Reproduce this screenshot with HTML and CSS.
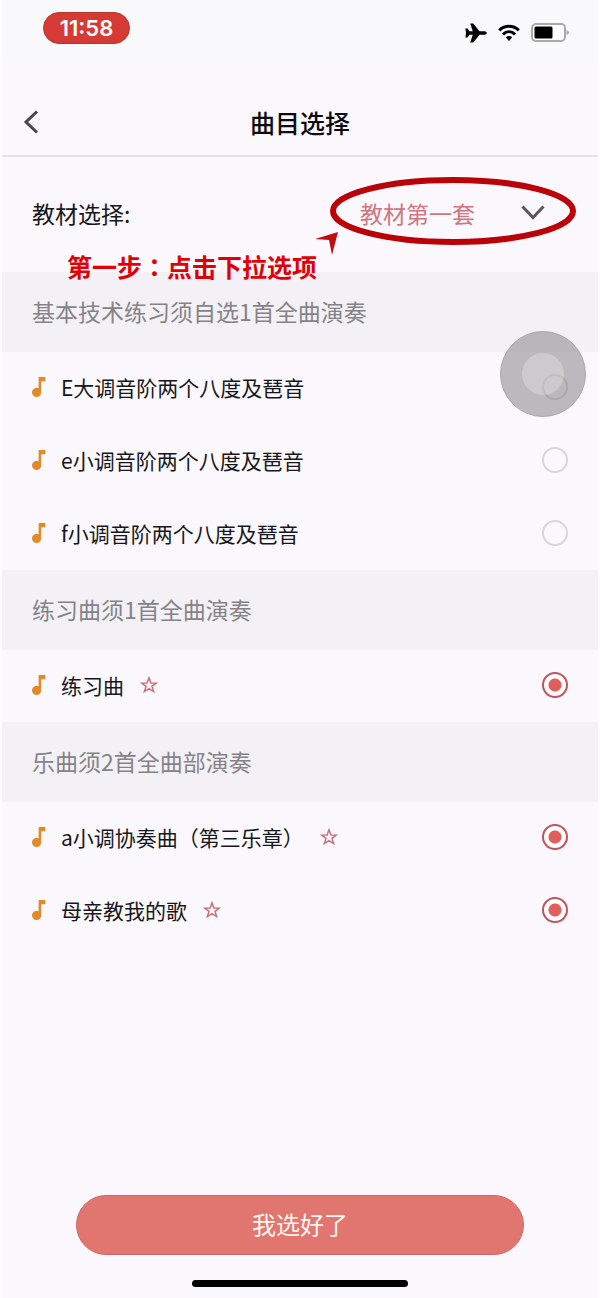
FILE: index.html
```html
<!DOCTYPE html>
<html lang="zh-CN">
<head>
<meta charset="utf-8">
<meta name="viewport" content="width=device-width, initial-scale=1">
<title>曲目选择</title>
<link rel="stylesheet" href="styles.css">
</head>
<body>
<svg class="defs" aria-hidden="true">
  <symbol id="note" viewBox="0 0 14 20">
    <path d="M6.600 0H13.400V4.200H9.200V15A4.600 4.600 0 1 1 6.600 11.200Z"/>
  </symbol>
  <symbol id="star" viewBox="0 0 18 18">
    <path d="M9 1.800 10.900 6.900 16.300 7.100 12 10.400 13.600 15.600 9 12.600 4.400 15.600 6 10.400 1.700 7.100 7.100 6.900Z"/>
  </symbol>
</svg>
<div class="screen">
  <div class="status">
    <span class="time">11:58</span>
    <div class="indicators">
      <svg width="22" height="20" viewBox="0 0 22 20" aria-label="飞行模式"><path d="M21.800 10C21.800 8.800 20.400 8.200 19 8.200H14.500L8.300 .6H5.200L7.800 8.200H4.400L2.600 5.600H.4L1 10 .4 14.400H2.600L4.400 11.800H7.800L5.200 19.400H8.300L14.500 11.800H19C20.400 11.800 21.800 11.200 21.800 10Z"/></svg>
      <svg class="wifi" width="22" height="18" viewBox="0 0 22 18" aria-label="无线网络"><path d="M1.200 6.400C6.800 1 15.200 1 20.800 6.400M5 10.300C8.600 7 13.400 7 17 10.300"/><path class="dot" d="M7.800 13.200Q11 10.800 14.200 13.200L11 17Z"/></svg>
      <svg class="battery" width="38" height="20" viewBox="0 0 38 20" aria-label="电池"><rect class="case" x="1" y="1" width="33" height="17" rx="4"/><rect x="3.500" y="3.500" width="18" height="12" rx="1.500"/><path class="tip" d="M35.500 7V12Q38 11 38 9.500T35.500 7Z"/></svg>
    </div>
  </div>
  <header class="bar">
    <button class="back" type="button" aria-label="返回"><svg width="16" height="24" viewBox="0 0 16 24"><path d="M14 1.500 3 12 14 22.500"/></svg></button>
    <h1 class="title">曲目选择</h1>
  </header>
  <main class="content">
    <div class="picker">
      <label class="picker-label" for="book">教材选择:</label>
      <div class="picker-field">
        <select class="picker-select" id="book"><option>教材第一套</option></select>
        <svg class="chevron" width="24" height="15" viewBox="0 0 24 15" aria-hidden="true"><path d="M1.500 1.500 12 12.500 22.500 1.500"/></svg>
      </div>
      <svg class="ring" width="262" height="84" viewBox="0 0 262 84" aria-hidden="true"><ellipse cx="138" cy="37" rx="120" ry="31"/><path d="M0 65 23 58 17 81 14 66Z"/></svg>
      <p class="hint">第一步<span class="colon" lang="zh-TW">：</span>点击下拉选项</p>
    </div>

    <section>
      <h2 class="heading">基本技术练习须自选1首全曲演奏</h2>
      <div class="rows">
        <label class="row"><svg class="note"><use href="#note"/></svg><span>E大调音阶两个八度及琶音</span><input class="pick" type="radio" name="basic"><span class="touch"></span></label>
        <label class="row"><svg class="note"><use href="#note"/></svg><span>e小调音阶两个八度及琶音</span><input class="pick" type="radio" name="basic"></label>
        <label class="row"><svg class="note"><use href="#note"/></svg><span>f小调音阶两个八度及琶音</span><input class="pick" type="radio" name="basic"></label>
      </div>
    </section>
    <section>
      <h2 class="heading">练习曲须1首全曲演奏</h2>
      <div class="rows">
        <label class="row"><svg class="note"><use href="#note"/></svg><span>练习曲</span><svg class="star"><use href="#star"/></svg><input class="pick" type="radio" name="etude" checked></label>
      </div>
    </section>
    <section>
      <h2 class="heading">乐曲须2首全曲部演奏</h2>
      <div class="rows">
        <label class="row"><svg class="note"><use href="#note"/></svg><span>a小调协奏曲（第三乐章）</span><svg class="star"><use href="#star"/></svg><input class="pick" type="checkbox" checked></label>
        <label class="row"><svg class="note"><use href="#note"/></svg><span>母亲教我的歌</span><svg class="star"><use href="#star"/></svg><input class="pick" type="checkbox" checked></label>
      </div>
    </section>
  </main>
  <footer class="footer">
    <button class="done" type="button">我选好了</button>
    <div class="home"></div>
  </footer>
</div>
</body>
</html>
```
FILE: styles.css
```css
* { box-sizing: border-box; }

body {
  margin: 0;
  background: #faf8fc;
  color: #17161a;
  font-family: "Noto Sans CJK SC", sans-serif;
}

h1, h2, p { margin: 0; }

button {
  border: 0;
  padding: 0;
  background: none;
  font: inherit;
}

svg { display: block; flex: none; }

.defs { position: absolute; width: 0; height: 0; }

.screen {
  display: flex;
  flex-direction: column;
  min-height: 100vh;
  border: solid #fefdff;
  border-width: 0 2px;
}

.status {
  display: flex;
  justify-content: space-between;
  align-items: center;
  height: 56px;
  padding: 0 29px 0 41px;
  background: #f9f9fb;
}

.time {
  width: 87px;
  height: 32px;
  border: 1px solid #b5372f;
  border-radius: 16px;
  background: #d53b34;
  color: #fff;
  font: 600 22px/30px Inter, sans-serif;
  text-align: center;
}

.indicators {
  display: flex;
  align-items: center;
  gap: 11px;
  padding-top: 10px;
}

.wifi { fill: none; stroke: #000; stroke-width: 3; }
.wifi .dot { fill: #000; stroke: none; }
.battery .case { fill: #fff; stroke: #aaa9ab; stroke-width: 2; }
.battery .tip { fill: #aaa9ab; }

.bar {
  display: grid;
  grid-template-columns: 40px 1fr 40px;
  align-items: center;
  height: 101px;
  padding: 32px 21px 0;
  border-bottom: 2px solid #e3e2e6;
}

.back svg {
  fill: none;
  stroke: #48474b;
  stroke-width: 3;
}

.title {
  color: #0c0b0e;
  font-size: 25px;
  font-weight: 500;
  line-height: 36px;
  text-align: center;
}

.content { flex: 1; }

.picker {
  position: relative;
  display: flex;
  justify-content: space-between;
  align-items: center;
  height: 115px;
  padding: 0 53px 4px 30px;
  font-size: 23px;
}

.picker-field {
  position: relative;
  display: flex;
  align-items: center;
  width: 185px;
}

.picker-select {
  appearance: none;
  width: 100%;
  margin: 0;
  padding: 0;
  border: 0;
  background: none;
  color: #d0757d;
  font: inherit;
}

.chevron {
  position: absolute;
  right: 0;
  fill: none;
  stroke: #58575b;
  stroke-width: 3;
  pointer-events: none;
}

.ring {
  position: absolute;
  top: 17px;
  right: 21px;
  fill: #c20d12;
  pointer-events: none;
}

.ring ellipse {
  fill: none;
  stroke: #b90308;
  stroke-width: 6;
}

.hint {
  position: absolute;
  top: 91px;
  left: 65px;
  color: #e10005;
  font-size: 25px;
  font-weight: 700;
  line-height: 36px;
}

.colon { font-family: "Noto Sans CJK TC", sans-serif; }

.heading {
  padding: 0 30px 2px;
  background: #f3f1f5;
  color: #858387;
  font-size: 23px;
  font-weight: 400;
  line-height: 78px;
}

.rows { display: grid; gap: 1px; }

.row {
  position: relative;
  display: flex;
  align-items: center;
  height: 72px;
  padding: 0 30px 2px;
  font-size: 21px;
}

.note {
  width: 14px;
  height: 20px;
  margin-right: 15px;
  fill: #e08a2c;
}

.star {
  width: 18px;
  height: 18px;
  margin-left: 16px;
  fill: none;
  stroke: #ce6d7b;
  stroke-width: 1.5;
}

.pick {
  appearance: none;
  width: 26px;
  height: 26px;
  margin: 0 0 0 auto;
  border: 2px solid #d8d6da;
  border-radius: 50%;
}

.pick:checked {
  border-color: #c2525b;
  background: radial-gradient(circle, #e05e5e 6px, #fff 7px);
}

.touch {
  position: absolute;
  top: -21px;
  right: 12px;
  display: grid;
  place-items: center;
  width: 86px;
  height: 86px;
  border: 1px solid #aaa8ab;
  border-radius: 50%;
  background: rgba(120, 118, 122, .48);
}

.touch::after {
  content: "";
  width: 42px;
  height: 42px;
  border-radius: 50%;
  background: rgba(255, 255, 255, .25);
}

.footer {
  display: grid;
  justify-items: center;
  gap: 25px;
  padding: 0 74px 11px;
}

.done {
  width: 100%;
  height: 60px;
  padding-bottom: 3px;
  border: 1px solid #cf6868;
  border-radius: 30px;
  background: #e17671;
  color: #fff6f0;
  font-size: 24px;
}

.home {
  width: 48%;
  height: 7px;
  border-radius: 4px;
  background: #000;
}
```
